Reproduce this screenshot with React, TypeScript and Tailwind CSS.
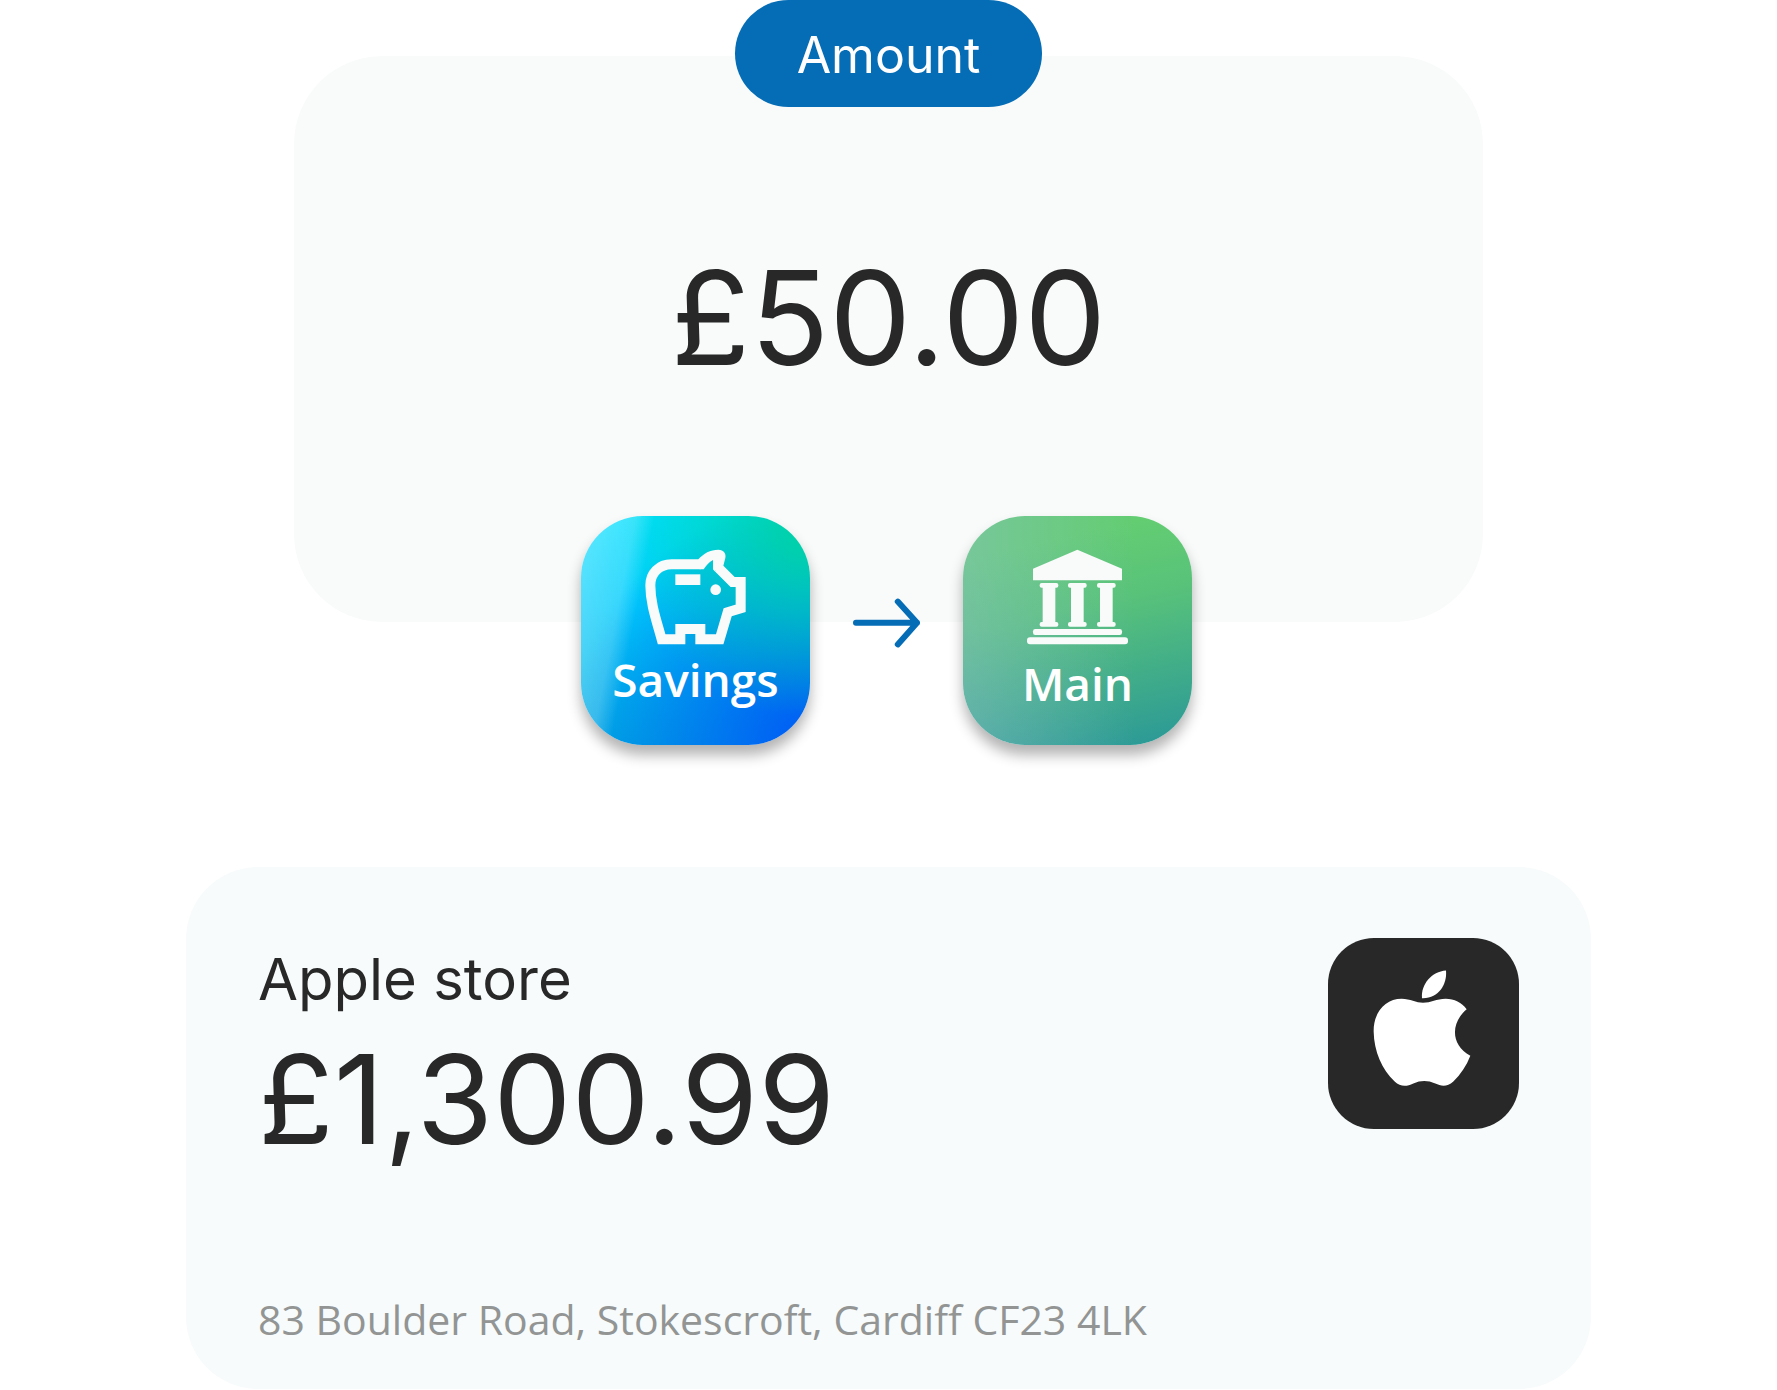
import type { ReactNode } from 'react';
import { clsx } from 'clsx';

interface AccountTileProps {
  label: string;
  icon: ReactNode;
  className: string;
  labelClassName?: string;
}

function PiggyIcon() {
  return (
    <svg viewBox="254 147 303 288" className="h-24 w-[101px]" fill="none" aria-hidden="true">
      <path
        d="M474 203L517 246H541V325L502 337L478 418H420V387H360V418H304C288 360 270 310 270 256C270 220 296 193 334 193H421"
        stroke="#f9fbfa"
        strokeWidth="30"
      />
      {/* Ear */}
      <path
        d="M414 178C430 160 450 149 474 149C490 149 498 160 495 174L489 197L463 214L458 208V180C446 186 438 197 430 208H418Z"
        fill="#f9fbfa"
      />
      <circle cx="466" cy="269" r="16" fill="#f9fbfa" />
      <path d="M345 223H420V255H345Z" fill="#f9fbfa" />
    </svg>
  );
}

function BankIcon() {
  return (
    <svg viewBox="258 147 303 288" className="h-24 w-[101px]" fill="#f9fbfa" aria-hidden="true">
      <path d="M409 149L543 206V241H276V206Z" />
      {[324, 409, 496].map((x) => (
        <g key={x}>
          <rect x={x - 28} y="249" width="56" height="14" rx="6" />
          <rect x={x - 19} y="255" width="38" height="118" />
          <rect x={x - 28} y="366" width="56" height="14" rx="6" />
        </g>
      ))}
      <rect x="276" y="387" width="267" height="18" rx="7" />
      <rect x="258" y="412" width="303" height="21" rx="9" />
    </svg>
  );
}

function ArrowIcon() {
  return (
    <svg
      viewBox="66 54 202 149"
      className="mb-4 h-[50px] w-[67px]"
      fill="none"
      stroke="#056db6"
      strokeWidth="18"
      strokeLinecap="round"
      strokeLinejoin="round"
      aria-hidden="true"
    >
      <path d="M75 128H259M201 64L259 128L201 193" />
    </svg>
  );
}

function AppleIcon() {
  return (
    <svg viewBox="186 147 294 350" className="h-[117px] w-[98px]" fill="#fff" aria-hidden="true">
      <path d="M405 148C409 190 382 233 333 231C329 190 362 151 405 148Z" />
      <path d="M336 245C360 245 376 233 404 233C430 233 452 244 467 264C418 306 419 371 478 404C466 435 449 460 427 481C408 498 390 495 373 487C350 477 329 477 307 487C286 497 268 497 251 481C213 445 189 391 188 331C187 274 223 233 272 233C298 233 315 245 336 245Z" />
    </svg>
  );
}

function AccountTile({ label, icon, className, labelClassName }: AccountTileProps) {
  return (
    <button
      type="button"
      className={clsx(
        'flex size-[229px] flex-col items-center rounded-[62px] pt-[33px] text-white shadow-[0_10px_14px_rgba(0,0,0,0.3)]',
        className,
      )}
    >
      {icon}
      <span className={clsx("font-['Open_Sans',sans-serif] text-[46px] leading-[68px] font-semibold", labelClassName)}>
        {label}
      </span>
    </button>
  );
}

export default function App() {
  return (
    <main className="flex min-h-screen flex-col items-center bg-white font-['Inter',sans-serif] text-[#282828]">
      <h2 className="z-10 rounded-full bg-[#056db6] px-[62px] pt-[25px] pb-[22px] text-[50px] leading-[60px] text-white">
        Amount
      </h2>

      {/* Transfer amount */}
      <section className="-mt-[51px] flex w-full max-w-[1189px] flex-col items-center rounded-[88px] bg-[#f9fbfa] pt-[190px]">
        <p className="text-[130px] leading-[144px]">£50.00</p>
        <div className="-mb-[123px] flex items-center gap-[43px] pt-[126px] pr-1">
          <AccountTile
            label="Savings"
            icon={<PiggyIcon />}
            className="bg-[linear-gradient(101deg,rgba(255,255,255,0.36)_0%,rgba(255,255,255,0.22)_20%,transparent_27%),radial-gradient(circle_at_100%_5%,#00d2a2_0%,transparent_60%),radial-gradient(circle_at_100%_100%,#0062f4_8%,transparent_75%),linear-gradient(180deg,#00deff_0%,#00cbfb_40%,#00aae0_100%)]"
          />
          <ArrowIcon />
          <AccountTile
            label="Main"
            icon={<BankIcon />}
            className="bg-[linear-gradient(90deg,rgba(150,190,215,0.4)_0%,transparent_75%),linear-gradient(168deg,#63cd72_15%,#58c27a_42%,#2b9997_98%)]"
            labelClassName="mt-1"
          />
        </div>
      </section>

      {/* Latest transaction */}
      <section className="mt-[245px] flex w-full max-w-[1405px] items-start justify-between rounded-[72px] bg-[#f7fbfc] px-[72px] pt-[71px] pb-10">
        <div>
          <h3 className="pt-[7px] text-[58px] leading-[68px]">Apple store</h3>
          <p className="text-[124px] leading-[172px]">£1,300.99</p>
          <address className="pt-[104px] font-['Open_Sans',sans-serif] text-[41px] leading-[60px] text-[#929594] not-italic">
            83 Boulder Road, Stokescroft, Cardiff CF23 4LK
          </address>
        </div>
        <div className="flex size-[191px] shrink-0 items-center justify-center rounded-[46px] bg-[#282828] pr-1 pb-2.5">
          <AppleIcon />
        </div>
      </section>
    </main>
  );
}
